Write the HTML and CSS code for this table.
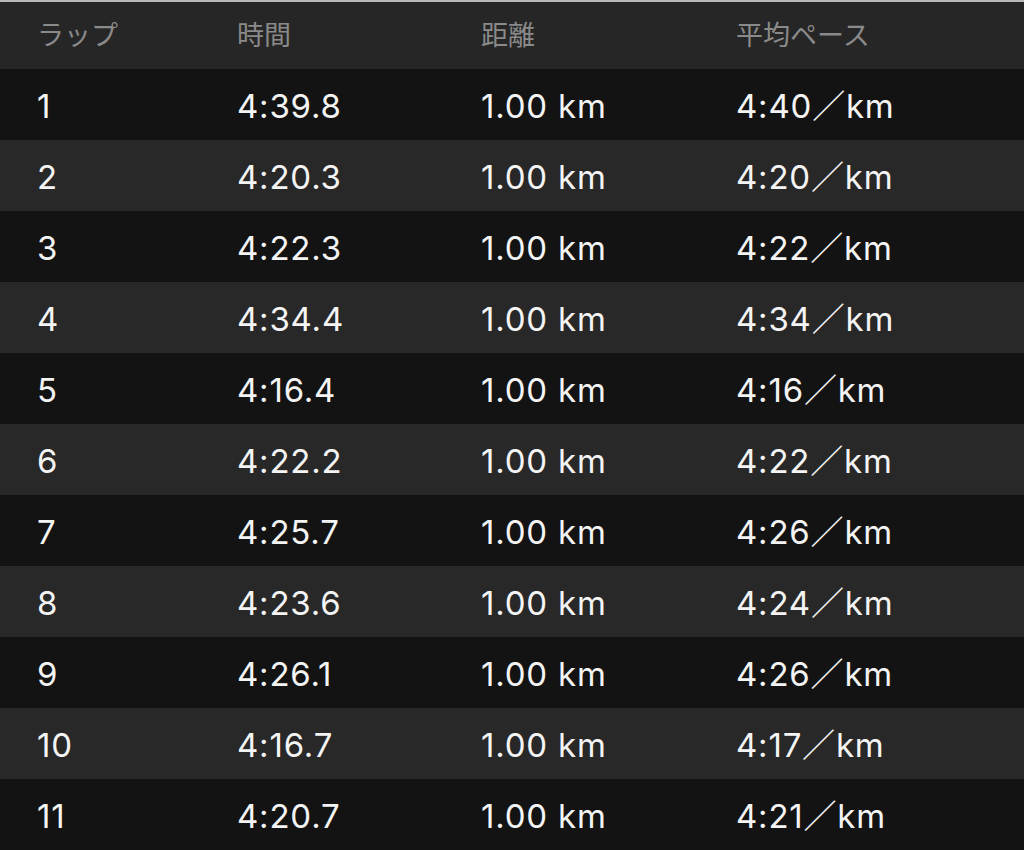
FILE: index.html
```html
<!DOCTYPE html>
<html lang="ja">
<head>
<meta charset="utf-8">
<link rel="stylesheet" href="styles.css">
</head>
<body>
<div class="table">
  <div class="row head"><span>ラップ</span><span>時間</span><span>距離</span><span>平均ペース</span></div>
  <div class="row"><span>1</span><span>4:39.8</span><span>1.00 km</span><span>4:40／km</span></div>
  <div class="row"><span>2</span><span>4:20.3</span><span>1.00 km</span><span>4:20／km</span></div>
  <div class="row"><span>3</span><span>4:22.3</span><span>1.00 km</span><span>4:22／km</span></div>
  <div class="row"><span>4</span><span>4:34.4</span><span>1.00 km</span><span>4:34／km</span></div>
  <div class="row"><span>5</span><span>4:16.4</span><span>1.00 km</span><span>4:16／km</span></div>
  <div class="row"><span>6</span><span>4:22.2</span><span>1.00 km</span><span>4:22／km</span></div>
  <div class="row"><span>7</span><span>4:25.7</span><span>1.00 km</span><span>4:26／km</span></div>
  <div class="row"><span>8</span><span>4:23.6</span><span>1.00 km</span><span>4:24／km</span></div>
  <div class="row"><span>9</span><span>4:26.1</span><span>1.00 km</span><span>4:26／km</span></div>
  <div class="row"><span>10</span><span>4:16.7</span><span>1.00 km</span><span>4:17／km</span></div>
  <div class="row"><span>11</span><span>4:20.7</span><span>1.00 km</span><span>4:21／km</span></div>
</div>
</body>
</html>
```
FILE: styles.css
```css
html, body {
  margin: 0;
  padding: 0;
  background: #131313;
}
.table {
  width: 1024px;
  height: 850px;
  overflow: hidden;
  border-top: 2px solid #b8b8b8;
  box-sizing: border-box;
  font-family: Inter, "Noto Sans CJK JP", sans-serif;
}
.row {
  display: grid;
  grid-template-columns: 200px 244px 255px 1fr;
  align-items: center;
  height: 71px;
  padding-left: 37px;
  color: #f4f4f4;
  font-size: 33px;
  letter-spacing: 0.8px;
  line-height: 1;
  background: #131313;
}
.row span {
  line-height: 40px;
  height: 40px;
  padding-top: 2px;
}
.row:nth-child(odd) {
  background: #282828;
}
.row.head {
  height: 67px;
  background: #262626;
  color: #8a8a8a;
  font-size: 27px;
  letter-spacing: 0;
  font-family: "Noto Sans CJK JP", sans-serif;
  padding-bottom: 4px;
  box-sizing: border-box;
}
.row.head span {
  padding-top: 0;
}
```
